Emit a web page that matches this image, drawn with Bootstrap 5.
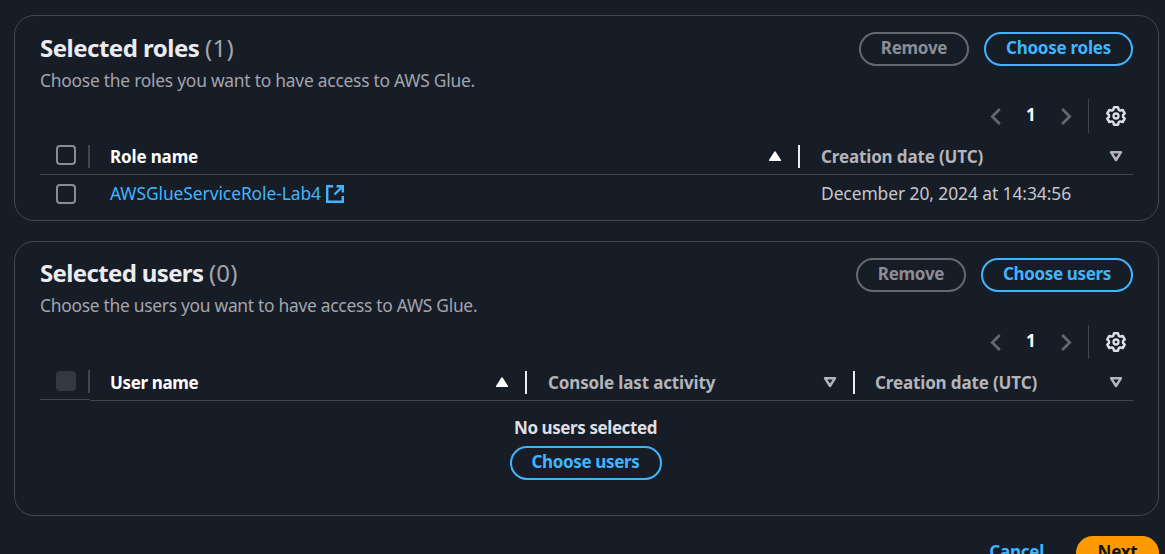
<!DOCTYPE html>
<html lang="en" data-bs-theme="dark">
<head>
<meta charset="utf-8">
<meta name="viewport" content="width=device-width, initial-scale=1">
<title>Choose roles and users</title>
<link href="https://cdn.jsdelivr.net/npm/bootstrap@5.3.0/dist/css/bootstrap.min.css" rel="stylesheet">
<style>
body{background:#161d26;color:#c6c6cd;font:17.4px/25px "Noto Sans","Open Sans",sans-serif;letter-spacing:-.07px;overflow:hidden;height:554px}
.page{padding:15px 6px 0 14px}
.panel{border:1px solid #424650;border-radius:20px;padding:16px 25px 0}
.panel-roles{height:206px}
.panel-users{height:275px;margin-top:20px;padding-top:15px}
.title{font-size:24px;line-height:32px;font-weight:700;color:#ebebf0;letter-spacing:-.5px}
.title span{font-weight:400;color:#a4a4ad;letter-spacing:.2px}
.panel-users .title{letter-spacing:-.64px}
.panel-users .title span{letter-spacing:.2px}
.desc{color:#a4a4ad;letter-spacing:-.24px;padding-top:4px;height:25px}
.panel-users .desc{letter-spacing:-.28px}
.acts{gap:15px;height:34px}
.panel-users .acts{margin-top:1px}
.pill{height:34px;border:2px solid #42b4ff;border-radius:17px;color:#42b4ff;background:none;font-weight:700;font-size:17px;letter-spacing:-.25px;line-height:28px;padding:0 0 2px;text-align:center}
.pill.w-users{letter-spacing:-.35px}
.pill.off{border-color:#656871;color:#8c8c94}
.w-remove{width:110px}
.w-roles{width:149px}
.w-users{width:152px}
.pager{height:34px;color:#656871;margin-top:10px;padding-right:7px}
.panel-users .pager{margin-top:11px}
.pager b{color:#fff;width:10px;margin:0 25px;line-height:32px;font-size:17px;padding-bottom:2px}
.rule{width:1px;height:34px;background:#424650;margin:0 17px 0 16px}
.cols{display:grid}
.g-roles{grid-template-columns:50px 710px 1fr}
.g-users{grid-template-columns:50px 437px 328px 1fr}
.hd{height:42px;border-bottom:1px solid #424650;font-weight:700;font-size:17px;letter-spacing:-.14px;color:#b4b4bb;padding:5px 0 0 20px}
.hd.inset{padding-left:21px}
.hd.pick{padding:3px 0 0 16px}
.hd.short{height:41px}
.hd.act{color:#fff}
.tight{letter-spacing:-.35px}
.sep{width:2px;height:23px;background:#ebebf0;margin-left:16px}
.sep.dim{background:#424650;margin:2px 0 0 12px}
.tri{margin-left:auto}
.hd.last{padding-right:10px}
.tick{width:20px;height:20px;border:2px solid #8c8c94;border-radius:4px}
.tick.off{background:#333843;border:0}
.row-line{height:38px}
.row-text{padding-bottom:1px}
.lnk{color:#42b4ff;text-decoration:none}
.empty{padding-right:2px}
.none-msg{font-weight:700;font-size:17px;letter-spacing:-.42px;padding-top:14px;color:#dedee3}
.foot{margin-top:20px;gap:32px}
.next{width:83px;background:#f90;color:#0f141a;border-color:#f90}
svg{display:block;flex:none}
</style>
</head>
<body>
<svg width="0" height="0" class="position-absolute">
<symbol id="gear" viewBox="0 0 20 20"><path d="M8 1.300h4l.8 2.500 1.400.8 2.500-.6 2 3.400L17 9.200v1.600l1.700 1.800-2 3.400-2.500-.6-1.400.8-.8 2.500H8l-.8-2.500-1.400-.8-2.500.6-2-3.400L3 10.800V9.200L1.300 7.400l2-3.400 2.500.6 1.400-.8z" fill="none" stroke="#dedee3" stroke-width="2.500" stroke-linejoin="round"/><circle cx="10" cy="10" r="2.500" fill="none" stroke="#dedee3" stroke-width="2.300"/></symbol>
<symbol id="prev" viewBox="0 0 11 17"><path d="M9.800 1 2.300 8.500 9.800 16" fill="none" stroke="#656871" stroke-width="2.700"/></symbol>
<symbol id="nxt" viewBox="0 0 11 17"><path d="M1.200 1 8.700 8.500 1.200 16" fill="none" stroke="#656871" stroke-width="2.700"/></symbol>
<symbol id="up" viewBox="0 0 14 12"><path d="M7 2 12.400 10.300H1.600z" fill="#fff" stroke="#fff" stroke-width="1.400" stroke-linejoin="round"/></symbol>
<symbol id="down" viewBox="0 0 14 12"><path d="M2 2.200h10L7 10z" fill="none" stroke="#b4b4bb" stroke-width="2.500" stroke-linejoin="round"/></symbol>
</svg>
<main class="page">
<section class="panel panel-roles">
  <div class="d-flex justify-content-between">
    <div><h2 class="title m-0">Selected roles <span>(1)</span></h2>
    <div class="desc">Choose the roles you want to have access to AWS Glue.</div></div>
    <div class="acts d-flex"><button class="pill off w-remove">Remove</button><button class="pill w-roles">Choose roles</button></div>
  </div>
  <div class="pager d-flex justify-content-end align-items-center">
    <svg width="11" height="17"><use href="#prev"/></svg><b>1</b><svg width="11" height="17"><use href="#nxt"/></svg>
    <div class="rule"></div><svg width="20" height="20"><use href="#gear"/></svg>
  </div>
  <div class="cols g-roles">
    <div class="hd pick d-flex align-items-center"><div class="tick"></div><div class="sep dim"></div></div>
    <div class="hd act d-flex align-items-center">Role name<svg class="tri" width="14" height="12"><use href="#up"/></svg><div class="sep"></div></div>
    <div class="hd inset last d-flex align-items-center">Creation date (UTC)<svg class="tri" width="14" height="12"><use href="#down"/></svg></div>
  </div>
  <div class="cols g-roles align-items-center row-line">
    <div class="ps-3"><div class="tick"></div></div>
    <div class="d-flex align-items-center" style="padding-left:20px"><a class="lnk row-text" href="#">AWSGlueServiceRole-Lab4</a>
      <svg width="18" height="18" viewBox="0 0 18 18" style="margin-left:5px" fill="none" stroke="#42b4ff" stroke-width="2.400"><path d="M7 1.200H1.200v15.600h15.600V11M10.500 1.200h6.300V7.500M16.500 1.500 8.500 9.500"/></svg></div>
    <div class="row-text" style="padding-left:21px">December 20, 2024 at 14:34:56</div>
  </div>
</section>
<section class="panel panel-users">
  <div class="d-flex justify-content-between">
    <div><h2 class="title m-0">Selected users <span>(0)</span></h2>
    <div class="desc">Choose the users you want to have access to AWS Glue.</div></div>
    <div class="acts d-flex"><button class="pill off w-remove">Remove</button><button class="pill w-users">Choose users</button></div>
  </div>
  <div class="pager d-flex justify-content-end align-items-center">
    <svg width="11" height="17"><use href="#prev"/></svg><b>1</b><svg width="11" height="17"><use href="#nxt"/></svg>
    <div class="rule"></div><svg width="20" height="20"><use href="#gear"/></svg>
  </div>
  <div class="cols g-users">
    <div class="hd pick short d-flex align-items-center"><div class="tick off"></div><div class="sep dim"></div></div>
    <div class="hd act d-flex align-items-center"><span class="tight">User name</span><svg class="tri" width="14" height="12"><use href="#up"/></svg><div class="sep"></div></div>
    <div class="hd inset d-flex align-items-center">Console last activity<svg class="tri" width="14" height="12"><use href="#down"/></svg><div class="sep"></div></div>
    <div class="hd last d-flex align-items-center">Creation date (UTC)<svg class="tri" width="14" height="12"><use href="#down"/></svg></div>
  </div>
  <div class="empty d-flex flex-column align-items-center">
    <div class="none-msg">No users selected</div>
    <button class="pill w-users" style="margin-top:6px">Choose users</button>
  </div>
</section>
<div class="foot d-flex justify-content-end"><button class="pill border-0">Cancel</button><button class="pill next">Next</button></div>
</main>
<script src="https://cdn.jsdelivr.net/npm/bootstrap@5.3.0/dist/js/bootstrap.bundle.min.js"></script>
</body>
</html>
